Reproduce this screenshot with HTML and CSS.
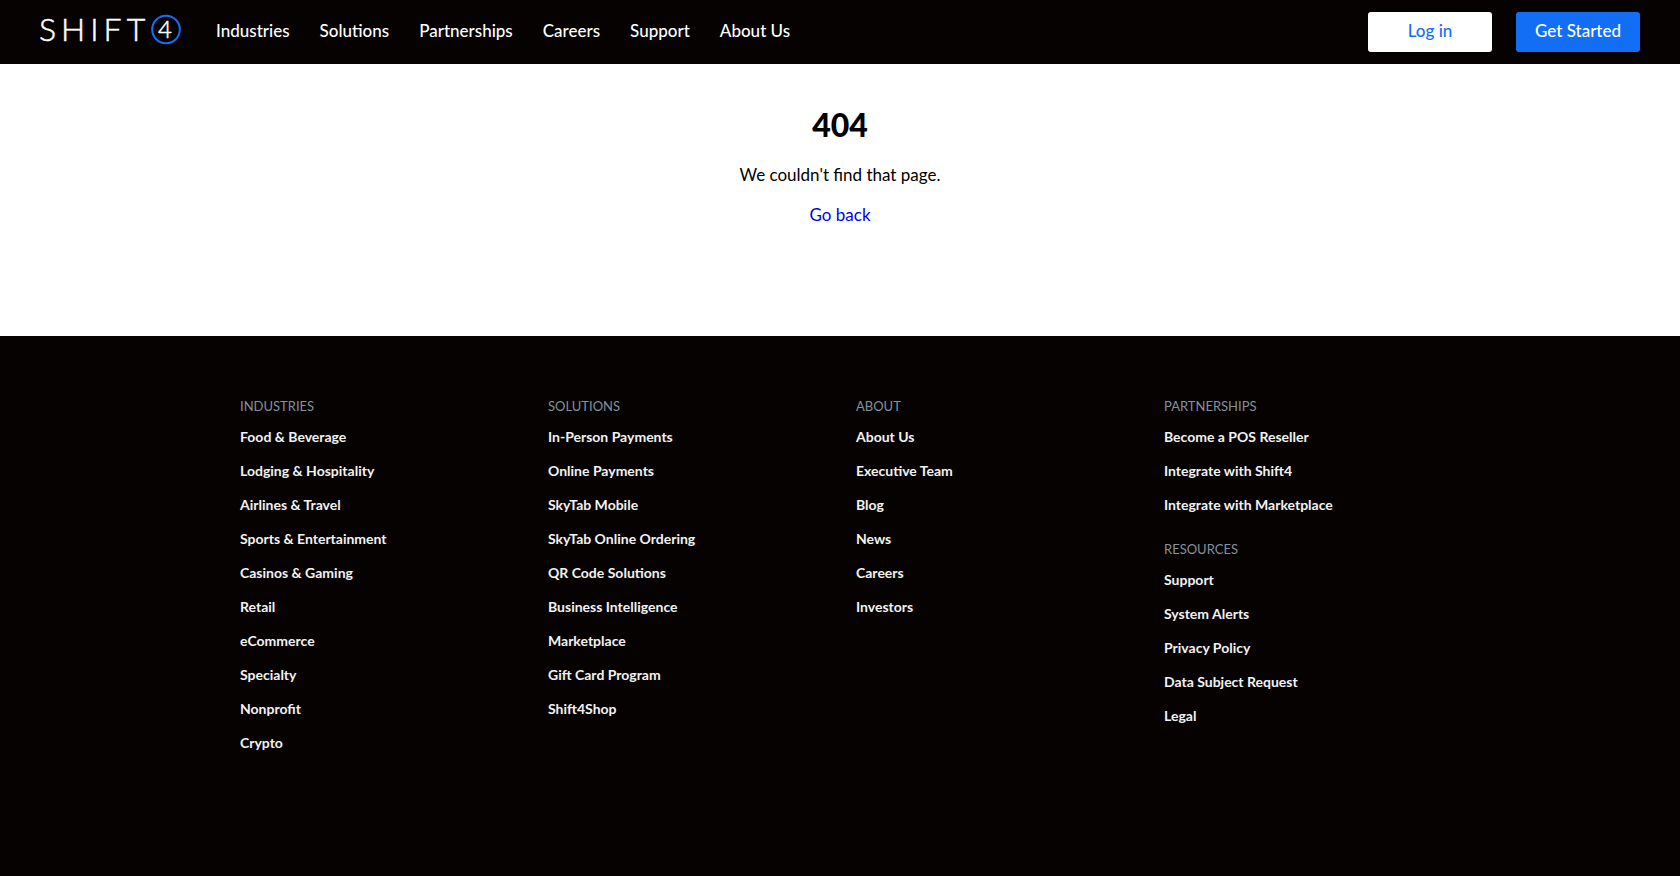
FILE: index.html
```html
<!DOCTYPE html>
<html lang="en">
<head>
    <meta charset="UTF-8">
    <meta name="viewport" content="width=device-width, initial-scale=1.0">
    <title>404 | Shift4</title>
    <link rel="stylesheet" href="styles.css">
</head>
<body>
    <header class="header">
        <a class="logo" href="#" aria-label="Shift4">
            <svg width="142" height="40" viewBox="0 0 142 40">
                <text class="logo-text" x="-1" y="29">SHIFT</text>
                <circle cx="126" cy="17.5" r="13.8" fill="none" stroke="#136ef6" stroke-width="2"/>
                <text class="logo-number" x="125" y="26">4</text>
            </svg>
        </a>
        <nav class="nav">
            <a href="#">Industries</a>
            <a href="#">Solutions</a>
            <a href="#">Partnerships</a>
            <a href="#">Careers</a>
            <a href="#">Support</a>
            <a href="#">About Us</a>
        </nav>
        <div class="actions">
            <a class="btn btn-light" href="#">Log in</a>
            <a class="btn btn-primary" href="#">Get Started</a>
        </div>
    </header>

    <main class="not-found">
        <h1>404</h1>
        <p>We couldn't find that page.</p>
        <a href="#">Go back</a>
    </main>

    <footer class="footer">
        <div class="footer-grid">
            <div class="footer-column">
                <h2>INDUSTRIES</h2>
                <ul>
                    <li><a href="#">Food &amp; Beverage</a></li>
                    <li><a href="#">Lodging &amp; Hospitality</a></li>
                    <li><a href="#">Airlines &amp; Travel</a></li>
                    <li><a href="#">Sports &amp; Entertainment</a></li>
                    <li><a href="#">Casinos &amp; Gaming</a></li>
                    <li><a href="#">Retail</a></li>
                    <li><a href="#">eCommerce</a></li>
                    <li><a href="#">Specialty</a></li>
                    <li><a href="#">Nonprofit</a></li>
                    <li><a href="#">Crypto</a></li>
                </ul>
            </div>
            <div class="footer-column">
                <h2>SOLUTIONS</h2>
                <ul>
                    <li><a href="#">In-Person Payments</a></li>
                    <li><a href="#">Online Payments</a></li>
                    <li><a href="#">SkyTab Mobile</a></li>
                    <li><a href="#">SkyTab Online Ordering</a></li>
                    <li><a href="#">QR Code Solutions</a></li>
                    <li><a href="#">Business Intelligence</a></li>
                    <li><a href="#">Marketplace</a></li>
                    <li><a href="#">Gift Card Program</a></li>
                    <li><a href="#">Shift4Shop</a></li>
                </ul>
            </div>
            <div class="footer-column">
                <h2>ABOUT</h2>
                <ul>
                    <li><a href="#">About Us</a></li>
                    <li><a href="#">Executive Team</a></li>
                    <li><a href="#">Blog</a></li>
                    <li><a href="#">News</a></li>
                    <li><a href="#">Careers</a></li>
                    <li><a href="#">Investors</a></li>
                </ul>
            </div>
            <div class="footer-column">
                <h2>PARTNERSHIPS</h2>
                <ul>
                    <li><a href="#">Become a POS Reseller</a></li>
                    <li><a href="#">Integrate with Shift4</a></li>
                    <li><a href="#">Integrate with Marketplace</a></li>
                </ul>
                <h2>RESOURCES</h2>
                <ul>
                    <li><a href="#">Support</a></li>
                    <li><a href="#">System Alerts</a></li>
                    <li><a href="#">Privacy Policy</a></li>
                    <li><a href="#">Data Subject Request</a></li>
                    <li><a href="#">Legal</a></li>
                </ul>
            </div>
        </div>
    </footer>
</body>
</html>
```
FILE: styles.css
```css
* {
    box-sizing: border-box;
    margin: 0;
    padding: 0;
}

body {
    display: flex;
    flex-direction: column;
    min-height: 100vh;
    font-family: Lato, sans-serif;
    font-size: 17px;
    line-height: 24px;
    color: #000;
    background: #fff;
}

.header {
    display: flex;
    align-items: center;
    padding: 12px 40px;
    background: #060202;
}

.header a {
    text-decoration: none;
}

.logo {
    display: flex;
    margin-right: 34px;
}

.logo svg {
    overflow: visible;
}

.logo-text,
.logo-number {
    font-weight: 300;
    fill: #fff;
    stroke: #fff;
    stroke-width: 0.5;
}

.logo-text {
    font-size: 32px;
    letter-spacing: 5px;
}

.logo-number {
    font-size: 24px;
    text-anchor: middle;
}

.nav {
    display: flex;
    gap: 30px;
    padding-bottom: 2px;
}

.nav a {
    color: #fff;
    font-weight: 500;
}

.actions {
    display: flex;
    gap: 24px;
    margin-left: auto;
}

.btn {
    width: 124px;
    padding: 7px 0 9px;
    border-radius: 3px;
    font-weight: 500;
    text-align: center;
}

.btn-light {
    background: #fff;
    color: #136ef6;
}

.btn-primary {
    background: #136ef6;
    color: #fff;
}

.not-found {
    padding: 39px 20px 109px;
    text-align: center;
}

.not-found h1 {
    margin-bottom: 16px;
    font-size: 32px;
    font-weight: 900;
    line-height: 44px;
}

.not-found p {
    margin-bottom: 16px;
}

.not-found a {
    color: #0000ee;
    text-decoration: none;
}

.footer {
    flex: 1;
    padding: 60px 20px 80px;
    background: #060202;
}

.footer-grid {
    display: grid;
    grid-template-columns: repeat(4, 1fr);
    gap: 32px;
    max-width: 1200px;
    margin: 0 auto;
}

.footer h2 {
    margin-bottom: 4px;
    font-size: 13px;
    font-weight: 400;
    line-height: 20px;
    color: #84919a;
}

.footer ul {
    margin-bottom: 17px;
    list-style: none;
}

.footer li {
    padding: 7px 0;
    font-size: 14px;
    line-height: 20px;
}

.footer li a {
    color: #f2f2f2;
    font-weight: 700;
    text-decoration: none;
}

@media (max-width: 900px) {
    .header {
        flex-wrap: wrap;
        gap: 16px;
    }

    .nav {
        flex-wrap: wrap;
    }

    .footer-grid {
        grid-template-columns: repeat(2, 1fr);
    }
}
```
